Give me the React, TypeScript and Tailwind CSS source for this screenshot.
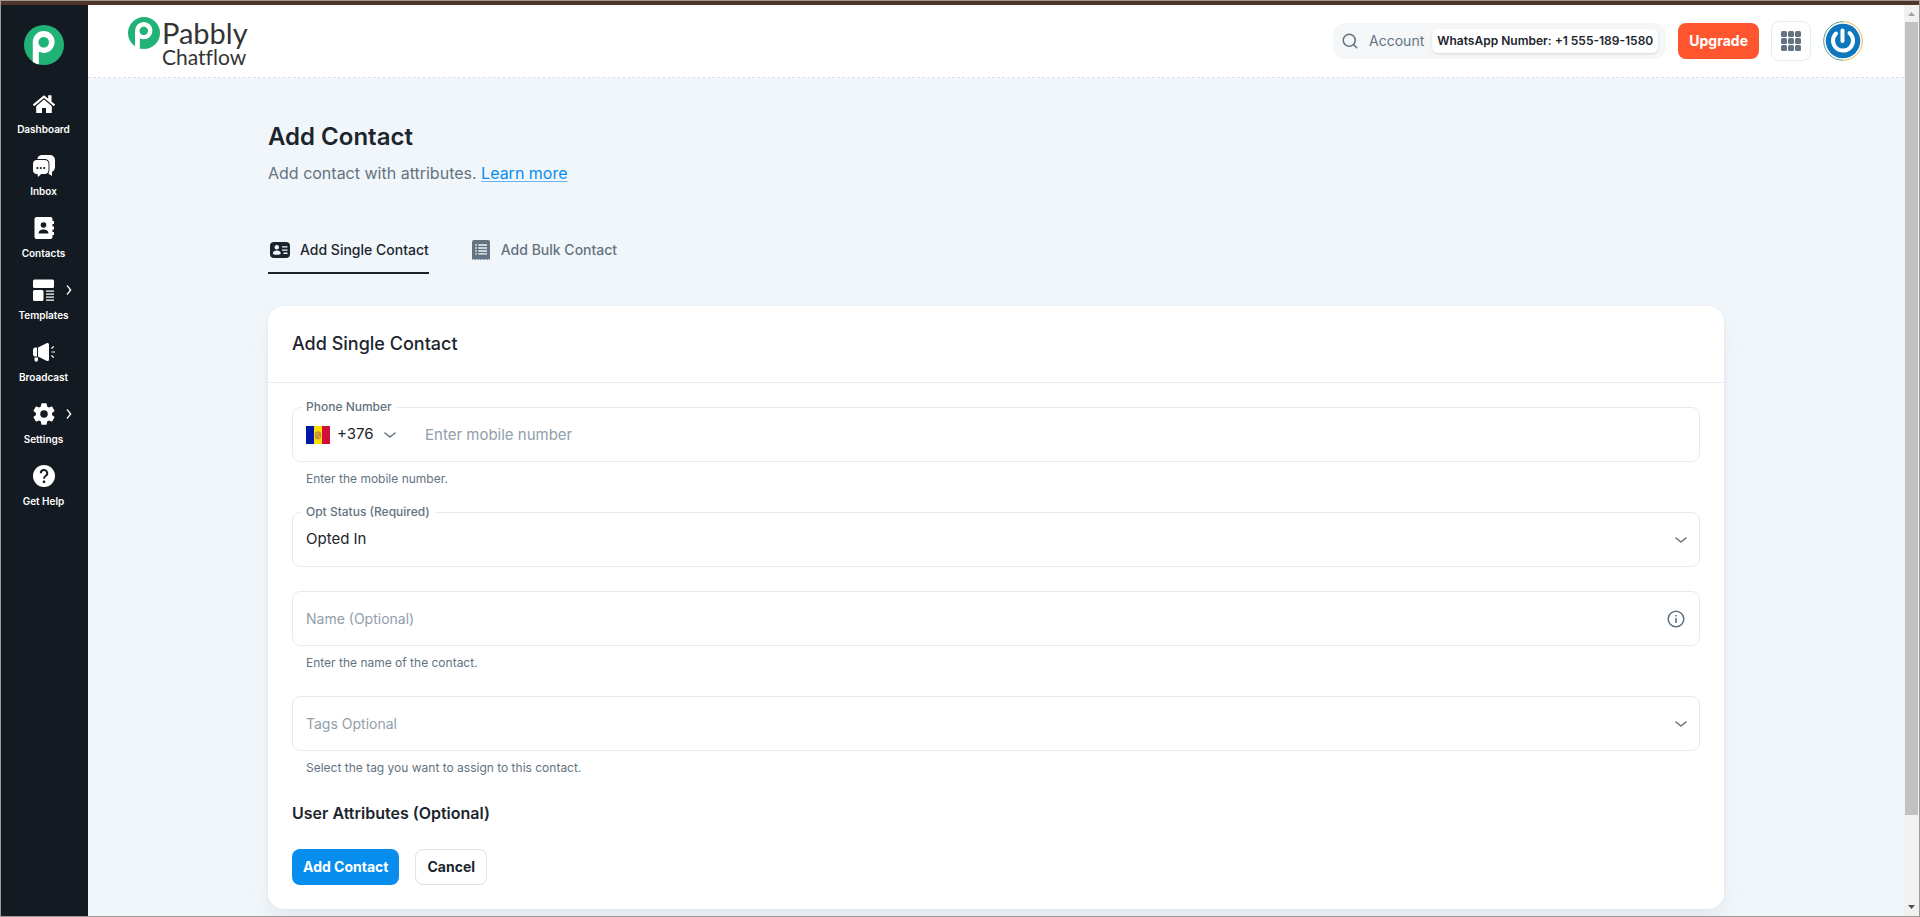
import React from 'react';
import { FiSearch } from 'react-icons/fi';
import { IoSettingsSharp } from 'react-icons/io5';

function Mark({ className }: { className: string }) {
  return (
    <svg viewBox="0 0 40 40" className={className} aria-hidden="true">
      <circle cx="20" cy="20" r="20" fill="#20b276" />
      <path
        fill="#fff"
        fillRule="evenodd"
        d="M8.800 37V17a10.900 10.900 0 1 1 10.900 10.900c-2 0-3.600-.4-4.900-1.200V39.500Q11.500 38.800 8.800 37ZM19.700 12a5.300 5.300 0 1 0 .01 0Z"
      />
    </svg>
  );
}

function HouseIcon() {
  return (
    <svg viewBox="0 0 24 24" className="size-6" fill="currentColor" aria-hidden="true">
      <path d="M12 7.600 19.800 14.200V21H14v-5h-4v5H4.200v-6.800Z" />
      <path d="M12 3.200 16.200 6.700V3.300h3.300v6.200l3.700 3.100-1.400 1.700L12 6.100l-9.800 8.200-1.400-1.700Z" />
    </svg>
  );
}

function InboxIcon() {
  return (
    <svg viewBox="0 0 24 24" className="size-6" fill="currentColor" aria-hidden="true">
      <path d="M9.500 1H18a5 5 0 0 1 5 5v7.500a5 5 0 0 1-3 4.400V22l-3.500-2.300.9-3V9.500a4.500 4.500 0 0 0-4.500-4.500H5.300A5 5 0 0 1 9.500 1Z" />
      <path d="M5 6h7.500a4 4 0 0 1 4 4v6a4 4 0 0 1-4 4H9.200L6 23l-.5-3H5a4 4 0 0 1-4-4v-6a4 4 0 0 1 4-4Z" stroke="#141a21" strokeWidth="1" paintOrder="stroke" />
      <g fill="#141a21">
        <circle cx="5.400" cy="14" r="1.100" />
        <circle cx="8.800" cy="14" r="1.100" />
        <circle cx="12.200" cy="14" r="1.100" />
      </g>
    </svg>
  );
}

function ContactsIcon() {
  return (
    <svg viewBox="0 0 24 24" className="size-6" fill="currentColor" aria-hidden="true">
      <path d="M4.500 1h14a2 2 0 0 1 2 2v2H22v3h-1.500v2.500H22v3h-1.500V16H22v3h-1.500v2a2 2 0 0 1-2 2h-14a2 2 0 0 1-2-2V3a2 2 0 0 1 2-2Z" />
      <g fill="#141a21">
        <circle cx="11.500" cy="9" r="2.800" />
        <path d="M6.500 17.500c0-5.500 10-5.500 10 0Z" />
      </g>
    </svg>
  );
}

function TemplatesIcon() {
  return (
    <svg viewBox="0 0 24 24" className="size-6" fill="currentColor" aria-hidden="true">
      <rect x="1" y="1.500" width="21" height="8.500" rx="1.500" />
      <rect x="1" y="12" width="10.500" height="11" rx="1.500" />
      <path d="M14 12.500h8v1.300h-8zM14 15.500h8v1.300h-8zM14 18.500h8v1.300h-8zM14 21.500h8v1.300h-8z" />
    </svg>
  );
}

function BroadcastIcon() {
  return (
    <svg viewBox="0 0 24 24" className="size-6" fill="currentColor" aria-hidden="true">
      <path d="M1 10a2.500 2.500 0 0 1 2.500-2.500H5v9H3.500A2.500 2.500 0 0 1 1 14ZM6 7.500l9-4.500q2-.5 2 1.500v15q0 2-2 1.500l-9-4.500ZM2.500 17.500H6V20a1.500 1.500 0 0 1-3.500 0Z" />
      <path d="M19.500 11.400H23v1.200h-3.500zM19 8l2.500-2 .7 1-2.500 2zM19 16l2.500 2 .7-1-2.500-2z" />
    </svg>
  );
}

function HelpIcon() {
  return (
    <svg viewBox="0 0 24 24" className="size-6" aria-hidden="true">
      <circle cx="12" cy="12" r="11" fill="currentColor" />
      <path d="M8.800 9.300a3.200 3.200 0 1 1 4.800 2.700q-1.600.9-1.600 2.700" fill="none" stroke="#141a21" strokeWidth="2" />
      <circle cx="12" cy="17.800" r="1.400" fill="#141a21" />
    </svg>
  );
}

function CardIcon() {
  return (
    <svg viewBox="0 0 24 24" className="size-6" fill="currentColor" aria-hidden="true">
      <rect x="2" y="4" width="20" height="16" rx="4" />
      <g fill="#f1f6fa">
        <circle cx="8.800" cy="9.300" r="2.200" />
        <path d="M4.800 15.500c0-4 8-4 8 0 0 1.800-8 1.800-8 0Z" />
        <path d="M14 8.200h5.500v1.300H14zM14 11.400h5.500v1.300H14zM15.500 14.600h4v1.300h-4z" />
      </g>
    </svg>
  );
}

function ListIcon() {
  return (
    <svg viewBox="0 0 24 24" className="size-6" fill="currentColor" aria-hidden="true">
      <path d="M5 2h14a2 2 0 0 1 2 2v18l-1.500-1L18 22l-1.500-1-1.500 1-1.500-1-1.500 1-1.500-1L9 22l-1.500-1L6 22l-1.500-1L3 22V4a2 2 0 0 1 2-2Z" />
      <path
        fill="#f1f6fa"
        d="M6.300 6.300h1.500v1.400H6.300zM9.300 6.300h8.700v1.400H9.300zM6.300 9.300h1.500v1.400H6.300zM9.300 9.300h8.700v1.400H9.300zM6.300 12.300h1.500v1.400H6.300zM9.300 12.300h8.700v1.400H9.300zM6.300 15.300h1.500v1.200H6.300zM9.300 15.300h8.700v1.200H9.300z"
      />
    </svg>
  );
}

function Chevron({ className }: { className: string }) {
  return (
    <svg
      viewBox="0 0 12 12"
      className={className}
      fill="none"
      stroke="currentColor"
      strokeWidth="1.600"
      strokeLinecap="round"
      strokeLinejoin="round"
      aria-hidden="true"
    >
      <path d="M1 4 6 8 11 4" />
    </svg>
  );
}

function Flag() {
  return (
    <svg viewBox="0 0 24 18" className="h-[18px] w-6 shrink-0" aria-label="Andorra">
      <path fill="#0018a8" d="M0 0h8v18H0z" />
      <path fill="#fedf00" d="M8 0h8v18H8z" />
      <path fill="#d0103a" d="M16 0h8v18h-8z" />
      <path fill="#c7903a" d="M9 6.500 12 5l3 1.500v4.500q0 2-3 2.500-3-.5-3-2.500Z" />
      <path fill="#e9b13c" d="M10.300 7.300h1.400v1.800h-1.400zM12.500 9.800h1.400v1.700h-1.400z" />
    </svg>
  );
}

const nav = [
  { label: 'Dashboard', icon: <HouseIcon /> },
  { label: 'Inbox', icon: <InboxIcon /> },
  { label: 'Contacts', icon: <ContactsIcon /> },
  { label: 'Templates', icon: <TemplatesIcon />, more: true },
  { label: 'Broadcast', icon: <BroadcastIcon /> },
  { label: 'Settings', icon: <IoSettingsSharp className="size-6" aria-hidden="true" />, more: true },
  { label: 'Get Help', icon: <HelpIcon /> },
];

function Sidebar() {
  return (
    <aside className="flex w-[87px] shrink-0 flex-col items-center bg-[#141a21] pt-5 pr-[2px] text-white">
      <a href="#home" aria-label="Pabbly home">
        <Mark className="size-10" />
      </a>
      <nav className="mt-[22px] flex w-full flex-col gap-1">
        {nav.map((n) => (
          <a
            key={n.label}
            href={'#' + n.label}
            className="relative flex h-[58px] flex-col items-center gap-[5px] pt-[5px] text-[10px] leading-4 font-semibold"
          >
            {n.icon}
            <span>{n.label}</span>
            {n.more && <Chevron className="absolute top-3 right-3 size-[10px] -rotate-90" />}
          </a>
        ))}
      </nav>
    </aside>
  );
}

function Header() {
  return (
    <header className="flex h-[73px] shrink-0 items-center justify-between border-b border-dashed border-[#dcdfe3] bg-white px-10">
      <a href="#home" className="flex items-start text-[#343434]" aria-label="Pabbly Chatflow">
        <Mark className="size-8" />
        <span className="flex flex-col pl-[2px] font-[Lato,sans-serif] [font-variant-ligatures:none]">
          <span className="text-[29px] leading-8">Pabbly</span>
          <span className="text-[21px] leading-4">Chatflow</span>
        </span>
      </a>
      <div className="flex items-center gap-3 pr-px">
        <div className="flex h-9 items-center rounded-xl bg-[#f5f6f8] px-2">
          <FiSearch className="size-[18px] text-[#637381]" aria-hidden="true" />
          <span className="ml-[10px] text-sm text-[#637381]">Account</span>
          <button className="ml-2 h-6 rounded-md bg-white px-[5px] text-xs font-semibold shadow-sm">
            WhatsApp Number: +1 555-189-1580
          </button>
        </div>
        <button className="h-9 rounded-lg bg-[#ff5630] px-[11px] text-sm font-bold text-white">Upgrade</button>
        <button
          aria-label="Apps"
          className="flex size-10 items-center justify-center rounded-lg border border-[#e8ebee] text-[#637381]"
        >
          <svg viewBox="0 0 20 20" className="size-5" fill="currentColor">
            {[0, 7, 14].map((y) => [0, 7, 14].map((x) => <rect key={x + '-' + y} x={x} y={y} width="6" height="6" rx="1.500" />))}
          </svg>
        </button>
        <button aria-label="Profile" className="size-10">
          <svg viewBox="0 0 40 40" className="size-10">
            <path d="M20 .7a19.300 19.300 0 0 0 0 38.600" fill="none" stroke="#5d9c94" />
            <path d="M20 .7a19.300 19.300 0 0 1 0 38.600" fill="none" stroke="#e5b951" />
            <circle cx="20" cy="20" r="17.300" fill="#0d76bd" />
            <path d="M13 12.500a10 10 0 1 0 13.500-.5M19.500 9.500v10.500" fill="none" stroke="#fff" strokeWidth="4" strokeLinecap="round" />
          </svg>
        </button>
      </div>
    </header>
  );
}

const field = 'relative flex h-[55px] items-center rounded-lg border border-[#e8eaed]';
const floating = 'absolute -top-[9px] left-2 bg-white px-[5px] text-xs leading-4 font-medium text-[#637381]';
const helper = 'mt-2 px-[14px] text-xs leading-[18px] text-[#637381]';
const control = 'h-full w-full min-w-0 flex-1 appearance-none bg-transparent outline-none placeholder:text-[#919eab]';

function ContactForm() {
  return (
    <section className="mt-8 rounded-2xl bg-white shadow-[0_0_2px_rgba(145,158,171,0.2),0_12px_24px_-4px_rgba(145,158,171,0.16)]">
      <div className="border-b border-[#e8eaed] px-6 py-6">
        <h2 className="text-lg leading-7 font-medium">Add Single Contact</h2>
      </div>
      <form className="px-6 pt-6 pb-6" onSubmit={(e) => e.preventDefault()}>
        <div className={field}>
          <label htmlFor="phone" className={floating}>Phone Number</label>
          <div className="relative ml-[13px] flex h-full items-center">
            <Flag />
            <select aria-label="Country code" className="h-full w-[66px] appearance-none bg-transparent pl-[7px] text-[15px] outline-none">
              <option>+376</option>
            </select>
            <Chevron className="pointer-events-none absolute right-0 size-3 text-[#637381]" />
          </div>
          <input id="phone" type="tel" placeholder="Enter mobile number" className={control + ' pl-[29px] text-[15px]'} />
        </div>
        <p className={helper}>Enter the mobile number.</p>

        <div className={field + ' mt-6'}>
          <label htmlFor="opt" className={floating}>Opt Status (Required)</label>
          <select id="opt" className={control + ' px-[13px] text-[15px]'}>
            <option>Opted In</option>
          </select>
          <Chevron className="pointer-events-none absolute right-3 size-3 text-[#637381]" />
        </div>

        <div className={field + ' mt-6'}>
          <input aria-label="Name (Optional)" placeholder="Name (Optional)" className={control + ' pl-[13px] text-sm'} />
          <button type="button" aria-label="About the name field" className="mr-[13px] text-[#637381]">
            <svg viewBox="0 0 20 20" className="size-5" fill="none" stroke="currentColor" strokeWidth="1.600">
              <circle cx="10" cy="10" r="7.800" />
              <path d="M10 9v5M10 6v1.500" />
            </svg>
          </button>
        </div>
        <p className={helper}>Enter the name of the contact.</p>

        <div className={field + ' mt-6'}>
          <input aria-label="Tags Optional" placeholder="Tags Optional" className={control + ' pl-[13px] text-sm'} />
          <button type="button" aria-label="Show tags" className="mr-3 text-[#637381]">
            <Chevron className="size-3" />
          </button>
        </div>
        <p className={helper}>Select the tag you want to assign to this contact.</p>

        <h3 className="mt-6 text-base leading-6 font-semibold">User Attributes (Optional)</h3>
        <div className="mt-6 flex gap-4">
          <button className="h-9 rounded-lg bg-[#078dee] px-[11px] text-sm font-bold text-white">Add Contact</button>
          <button type="button" className="h-9 rounded-lg border border-[#dfe2e6] px-[11px] text-sm font-bold">Cancel</button>
        </div>
      </form>
    </section>
  );
}

function Scrollbar() {
  return (
    <div className="flex w-[15px] shrink-0 flex-col items-center bg-[#f1f1f1]" aria-hidden="true">
      <svg viewBox="0 0 15 17" className="h-[17px] w-[15px]" fill="#a3a3a3">
        <path d="M4 11 7.500 7 11 11z" />
      </svg>
      <div className="w-[13px] grow-[793] bg-[#c1c1c1]" />
      <div className="grow-[84]" />
      <svg viewBox="0 0 15 17" className="h-[17px] w-[15px]" fill="#505050">
        <path d="M4 6 7.500 10 11 6z" />
      </svg>
    </div>
  );
}

export default function App() {
  return (
    <div className="flex min-h-screen flex-col border border-[#a19898] bg-[#f1f6fa] font-[Inter,sans-serif] text-[#1c252e]">
      <div className="h-1 shrink-0 bg-[#4f3528]" />
      <div className="flex flex-1">
        <Sidebar />
        <div className="flex min-w-0 flex-1 flex-col">
          <Header />
          <main className="mx-auto w-full max-w-[1536px] px-10 pt-10 pb-[7px]">
            <h1 className="text-2xl leading-[38px] font-semibold">Add Contact</h1>
            <p className="mt-[5px] text-base leading-6 text-[#637381]">
              Add contact with attributes.{' '}
              <a href="#learn" className="text-[#078dee] underline decoration-[#078dee]/60 decoration-1 underline-offset-2">Learn more</a>
            </p>
            <div role="tablist" className="mt-[41px] flex gap-10 text-sm font-medium">
              <button role="tab" aria-selected="true" className="flex h-12 items-center gap-2 border-b-2 border-[#1c252e] pt-[2px]">
                <CardIcon />
                Add Single Contact
              </button>
              <button role="tab" aria-selected="false" className="flex h-12 items-center gap-2 border-b-2 border-transparent pt-[2px] text-[#637381]">
                <ListIcon />
                Add Bulk Contact
              </button>
            </div>
            <ContactForm />
          </main>
        </div>
        <Scrollbar />
      </div>
    </div>
  );
}
